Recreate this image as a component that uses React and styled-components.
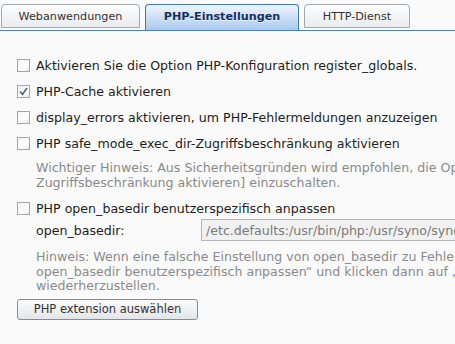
import styled, { createGlobalStyle } from "styled-components";

const Global = createGlobalStyle`
  html, body {
    margin: 0;
    padding: 0;
    background: #fafafa;
    overflow: hidden;
  }
  body {
    font-family: "DejaVu Sans", Verdana, sans-serif;
    font-size: 12.6px;
    color: #1e1e1e;
  }
`;

const Page = styled.div`
  width: 455px;
  height: 344px;
  overflow: hidden;
`;

const TabBar = styled.div`
  display: flex;
  align-items: flex-end;
  gap: 5px;
  height: 31px;
  border-bottom: 1px solid #4d82bb;
  box-sizing: border-box;
  padding-left: 1px;
`;

const Tab = styled.div`
  box-sizing: border-box;
  width: ${(p) => p.$w}px;
  height: ${(p) => (p.$active ? 26 : 24)}px;
  margin-bottom: ${(p) => (p.$active ? 0 : 2)}px;
  display: flex;
  align-items: center;
  justify-content: center;
  border: 1px solid ${(p) => (p.$active ? "#3f78b4" : "#a3a8ae")};
  border-bottom: ${(p) => (p.$active ? "none" : "1px solid #a3a8ae")};
  border-radius: 4px 4px 0 0;
  background: ${(p) =>
    p.$active
      ? "linear-gradient(#eef5fd 0%, #cfe2f7 45%, #a9caee 100%)"
      : "linear-gradient(#fdfdfd, #e9ecf0)"};
  color: ${(p) => (p.$active ? "#13305e" : "#333")};
  font-weight: ${(p) => (p.$active ? "bold" : "normal")};
  text-shadow: ${(p) => (p.$active ? "0 1px 0 rgba(255,255,255,0.6)" : "none")};
  font-size: 11.2px;
  padding-bottom: ${(p) => (p.$active ? 2 : 0)}px;
`;

const Content = styled.div`
  padding: 21px 0 0 17px;
`;

const Row = styled.label`
  display: flex;
  align-items: center;
  gap: 6px;
  height: 26px;
  white-space: nowrap;
  margin-top: ${(p) => p.$mt || 0}px;
`;

const Box = styled.span`
  box-sizing: border-box;
  width: 13px;
  height: 13px;
  flex: none;
  border: 1px solid #a6a6a6;
  background: linear-gradient(135deg, #f2f2f2, #ffffff 60%, #e9e9e9);
  display: flex;
  align-items: center;
  justify-content: center;
`;

const Note = styled.div`
  margin-left: 19px;
  color: #8a8a8a;
  line-height: 14.5px;
  white-space: nowrap;
  padding-top: ${(p) => p.$pt || 0}px;
`;

const FieldRow = styled.div`
  display: flex;
  align-items: center;
  height: 22px;
  margin-left: 19px;
  margin-top: -2px;
  white-space: nowrap;
`;

const FieldLabel = styled.span`
  width: 165px;
  flex: none;
`;

const Input = styled.div`
  box-sizing: border-box;
  height: 22px;
  flex: none;
  width: 300px;
  border: 1px solid #b4b4b4;
  background: #f1f1f1;
  color: #7a7a7a;
  padding-left: 4px;
  display: flex;
  align-items: center;
`;

const Button = styled.button`
  box-sizing: border-box;
  margin-top: 5px;
  width: 181px;
  height: 21px;
  border: 1px solid #8c8c8c;
  border-radius: 3px;
  background: linear-gradient(#fbfbfb, #e3e6ea);
  font-family: inherit;
  font-size: 11.5px;
  color: #333;
  padding: 0;
`;

const Check = ({ checked }) => (
  <Box>
    {checked && (
      <svg width="9" height="9" viewBox="0 0 9 9">
        <path d="M1 4.5 L3.5 7.5 L8 1" fill="none" stroke="#4b5c9c" strokeWidth="1.6" />
      </svg>
    )}
  </Box>
);

export default function App() {
  return (
    <Page>
      <Global />
      <TabBar>
        <Tab $w={139}>Webanwendungen</Tab>
        <Tab $w={154} $active>PHP-Einstellungen</Tab>
        <Tab $w={106}>HTTP-Dienst</Tab>
      </TabBar>
      <Content>
        <Row>
          <Check />
          Aktivieren Sie die Option PHP-Konfiguration register_globals.
        </Row>
        <Row>
          <Check checked />
          PHP-Cache aktivieren
        </Row>
        <Row>
          <Check />
          display_errors aktivieren, um PHP-Fehlermeldungen anzuzeigen
        </Row>
        <Row>
          <Check />
          PHP safe_mode_exec_dir-Zugriffsbeschränkung aktivieren
        </Row>
        <Note $pt={5}>
          Wichtiger Hinweis: Aus Sicherheitsgründen wird empfohlen, die Option [PHP safe_mode_exec_dir-
          <br />
          Zugriffsbeschränkung aktivieren] einzuschalten.
        </Note>
        <Row $mt={5}>
          <Check />
          PHP open_basedir benutzerspezifisch anpassen
        </Row>
        <FieldRow>
          <FieldLabel>open_basedir:</FieldLabel>
          <Input>/etc.defaults:/usr/bin/php:/usr/syno/synoman</Input>
        </FieldRow>
        <Note $pt={9}>
          Hinweis: Wenn eine falsche Einstellung von open_basedir zu Fehlern führt, deaktivieren Sie „PHP
          <br />
          open_basedir benutzerspezifisch anpassen“ und klicken dann auf „Übernehmen“, um die Standardwerte
          <br />
          wiederherzustellen.
        </Note>
        <Button>PHP extension auswählen</Button>
      </Content>
    </Page>
  );
}
